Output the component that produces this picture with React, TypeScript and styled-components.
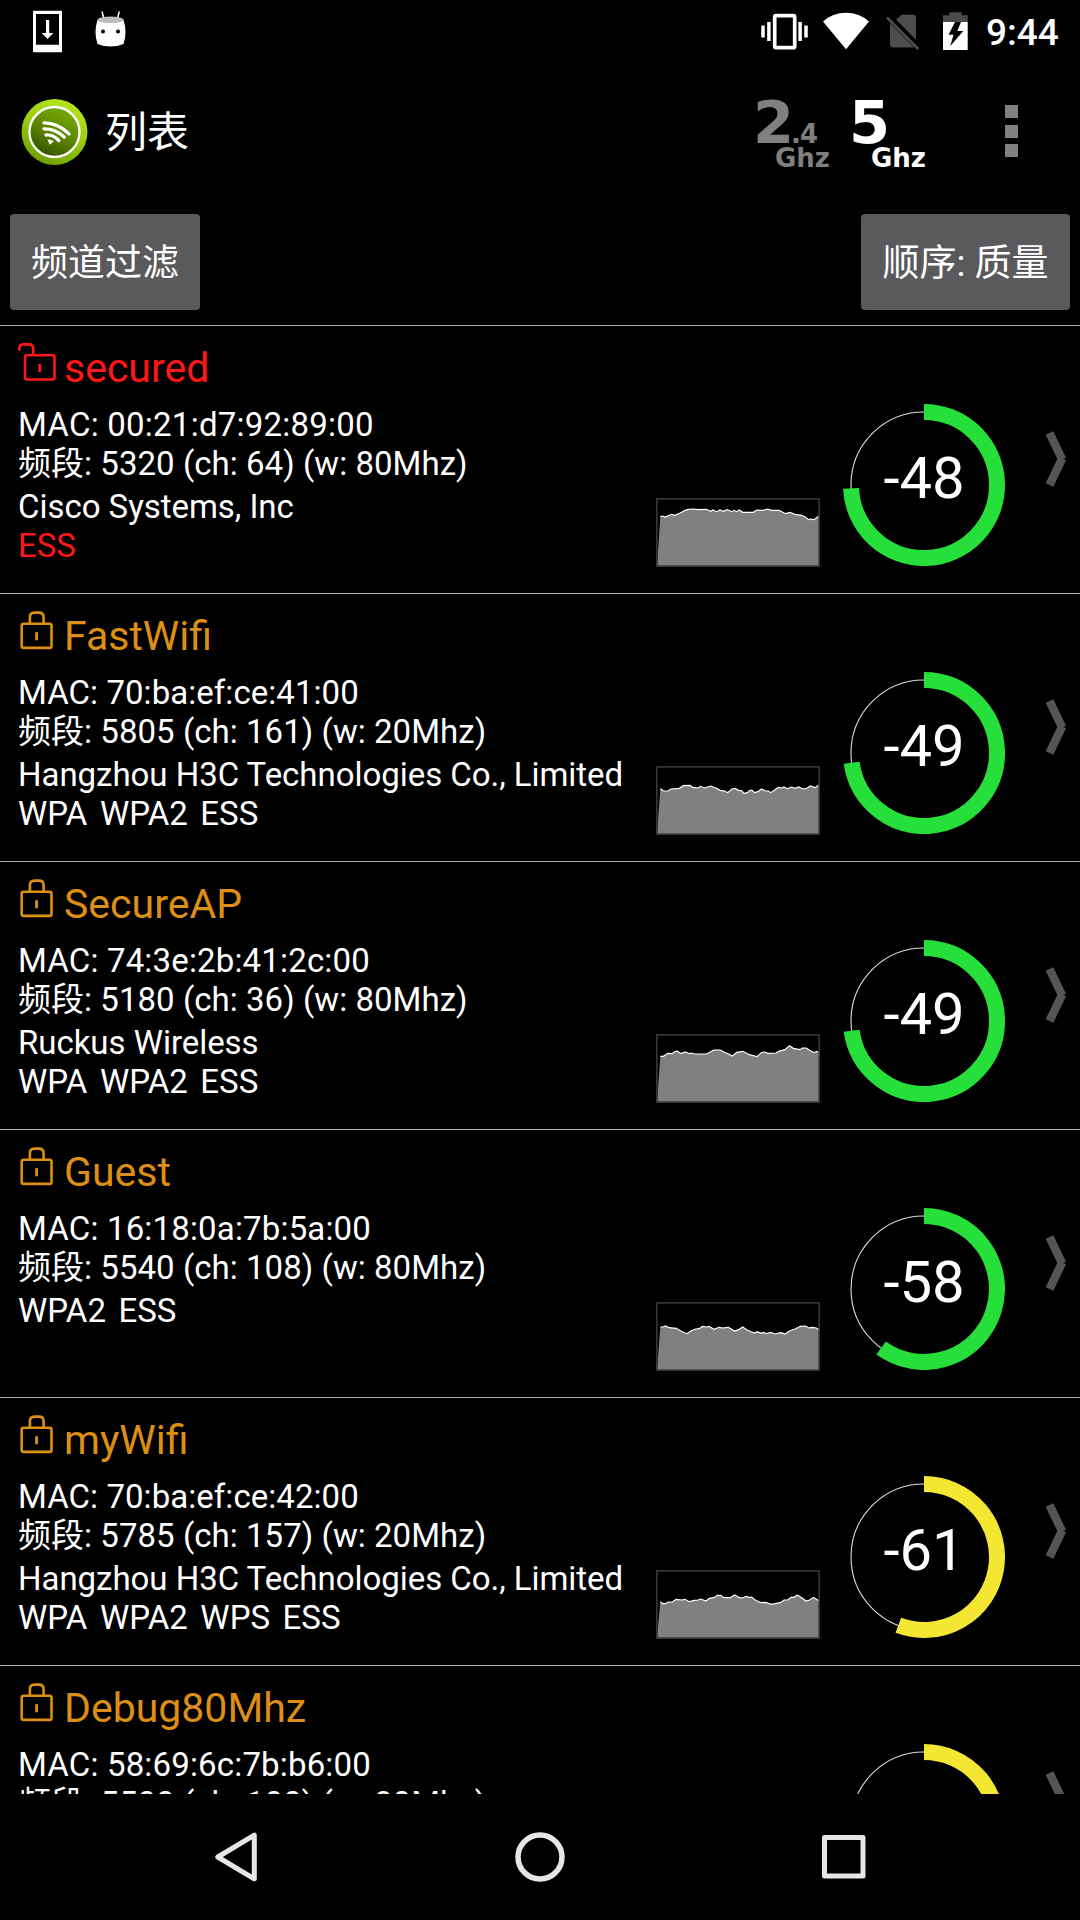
import React from "react";
import styled, { createGlobalStyle } from "styled-components";

const GlobalStyle = createGlobalStyle`
  html, body { margin: 0; padding: 0; background: #000; }
  * { box-sizing: border-box; }
  svg { display: block; flex: none; }
`;

const Screen = styled.div`
  width: 1080px;
  height: 1920px;
  display: flex;
  flex-direction: column;
  overflow: hidden;
  background: #000;
  color: #fff;
  font-family: Roboto, "Noto Sans CJK SC", sans-serif;
`;

const StatusBar = styled.header`
  height: 72px;
  flex: none;
  display: flex;
  justify-content: space-between;
`;

const StatusGroup = styled.div`
  display: flex;
`;

const Clock = styled.span`
  width: 94px;
  padding-top: 11px;
  font-size: 37px;
  line-height: 44px;
  font-weight: 500;
  white-space: nowrap;
`;

const AppBar = styled.div`
  height: 120px;
  flex: none;
  display: flex;
  align-items: center;
  justify-content: space-between;
  padding: 0 62px 0 21px;
`;

const Brand = styled.div`
  display: flex;
  align-items: center;
  gap: 17px;
`;

const PageTitle = styled.h1`
  margin: 0;
  padding-top: 2px;
  font-size: 42px;
  line-height: 50px;
  font-weight: 400;
`;

const Actions = styled.div`
  display: flex;
  align-items: center;
`;

const BandButton = styled.button<{ $active?: boolean }>`
  width: 96px;
  height: 84px;
  margin: 0;
  padding: 0;
  border: 0;
  background: none;
  display: flex;
  flex-direction: column;
  color: ${(p) => (p.$active ? "#fff" : "#808080")};
  font-family: "DejaVu Sans", sans-serif;
  font-weight: 700;
  text-align: left;
  white-space: nowrap;
`;

const BandNumber = styled.span`
  font-size: 59px;
  line-height: 66px;
  height: 55px;
  letter-spacing: -3px;
`;

const BandFraction = styled.small`
  font-size: 26px;
  letter-spacing: -1px;
`;

const BandUnit = styled.span`
  font-size: 26px;
  line-height: 26px;
  padding-left: 22px;
`;

const Overflow = styled.button`
  margin: 0 0 2px 60px;
  padding: 0;
  border: 0;
  background: none;
  display: flex;
  flex-direction: column;
  gap: 6.5px;
`;

const OverflowDot = styled.i`
  width: 13px;
  height: 13px;
  background: #808080;
`;

const FilterBar = styled.div`
  height: 133px;
  flex: none;
  display: flex;
  justify-content: space-between;
  align-items: flex-start;
  padding: 22px 10px 0;
`;

const FilterButton = styled.button<{ $width: number }>`
  width: ${(p) => p.$width}px;
  height: 96px;
  margin: 0;
  padding: 3px 0 0;
  border: 0;
  border-radius: 4px;
  background: #5a595b;
  color: #fff;
  font-family: Roboto, "Noto Sans CJK SC", sans-serif;
  font-size: 37px;
  line-height: 44px;
  white-space: nowrap;
`;

const List = styled.ul`
  flex: 1;
  min-height: 0;
  margin: 0;
  padding: 0;
  overflow: hidden;
  list-style: none;
`;

const Row = styled.li`
  height: 268px;
  display: flex;
  border-top: 1px solid #adadad;
  padding-left: 18px;
`;

const Info = styled.div`
  width: 638px;
  flex: none;
  padding-top: 15px;
`;

const NameLine = styled.div<{ $color: string }>`
  display: flex;
  height: 51px;
  color: ${(p) => p.$color};
`;

const Name = styled.span`
  padding-top: 3px;
  font-size: 41px;
  line-height: 48px;
  white-space: nowrap;
`;

const Details = styled.div<{ $gap: number }>`
  margin-top: ${(p) => p.$gap}px;
  font-size: 33px;
  line-height: 39px;
`;

const Line = styled.div<{ $color?: string; $tracking?: number }>`
  color: ${(p) => p.$color || "#fff"};
  letter-spacing: ${(p) => p.$tracking || 0}px;
  white-space: pre;
`;

const Flags = styled(Line)`
  display: flex;
  gap: 12.5px;
`;

const ChartCell = styled.div`
  width: 164px;
  flex: none;
  padding-top: 172px;
`;

const GaugeCell = styled.div`
  width: 162px;
  height: 162px;
  flex: none;
  margin: 78px 0 0 23px;
  display: grid;
  place-items: center;
  > * { grid-area: 1 / 1; }
`;

const Level = styled.span`
  font-size: 58px;
  line-height: 68px;
  padding-bottom: 15px;
`;

const ChevronCell = styled.div`
  flex: none;
  margin: 103px 0 0 38px;
`;

const NavBar = styled.nav`
  height: 126px;
  flex: none;
  display: flex;
  justify-content: space-between;
  align-items: center;
  padding: 0 206px;
`;

interface Network {
  name: string;
  open?: boolean;
  mac: string;
  band: string;
  vendor?: string;
  flags: string[];
  level: number;
  trace: string;
}

const RED = "#fd1717";
const ORANGE = "#dd8f13";

const networks: Network[] = [
  {
    name: "secured", open: true, mac: "00:21:d7:92:89:00",
    band: "5320 (ch: 64) (w: 80Mhz)", vendor: "Cisco Systems, Inc", flags: ["ESS"], level: -48,
    trace: "13,56 20,54 27,57 47,49 57,52 72,45 92,35 112,33 127,35 150,34 165,40 170,36 182,41 192,36 202,40 214,35 227,41 235,37 242,41 250,36 260,43 292,43 302,36 322,37 335,33 347,37 369,37 389,47 402,43 417,49 437,52 449,58 457,65 464,63 474,65 489,54",
  },
  {
    name: "FastWifi", mac: "70:ba:ef:ce:41:00",
    band: "5805 (ch: 161) (w: 20Mhz)", vendor: "Hangzhou H3C Technologies Co., Limited",
    flags: ["WPA", "WPA2", "ESS"], level: -49,
    trace: "13,68 22,75 36,75 45,69 70,67 82,59 102,58 110,64 127,66 133,61 145,66 164,60 180,66 192,73 206,75 215,80 228,69 237,67 248,73 256,74 264,82 274,80 282,73 288,73 296,80 306,77 316,69 329,75 337,75 344,80 355,73 367,64 378,66 384,63 394,68 406,63 418,67 428,63 441,69 454,66 463,60 477,65 489,57",
  },
  {
    name: "SecureAP", mac: "74:3e:2b:41:2c:00",
    band: "5180 (ch: 36) (w: 80Mhz)", vendor: "Ruckus Wireless",
    flags: ["WPA", "WPA2", "ESS"], level: -49,
    trace: "13,67 22,67 36,58 48,59 58,52 66,52 74,59 88,54 99,59 106,57 115,60 152,60 173,48 193,48 205,55 218,60 229,66 242,55 261,52 280,62 303,68 316,56 326,54 336,58 360,57 368,52 387,47 400,35 412,43 432,47 439,42 451,42 463,50 474,56 482,52 489,56",
  },
  {
    name: "Guest", mac: "16:18:0a:7b:5a:00",
    band: "5540 (ch: 108) (w: 80Mhz)", flags: ["WPA2", "ESS"], level: -58,
    trace: "13,75 20,75 28,72 39,77 61,79 74,87 93,95 104,87 119,81 130,80 139,73 151,75 159,73 174,82 189,76 200,78 217,76 236,87 248,83 260,75 272,83 287,90 295,93 304,89 315,94 323,91 330,95 345,91 355,96 375,92 387,96 400,87 417,81 433,73 448,72 459,78 467,76 481,78 489,83",
  },
  {
    name: "myWifi", mac: "70:ba:ef:ce:42:00",
    band: "5785 (ch: 157) (w: 20Mhz)", vendor: "Hangzhou H3C Technologies Co., Limited",
    flags: ["WPA", "WPA2", "WPS", "ESS"], level: -61,
    trace: "13,95 21,101 29,101 36,96 49,96 60,88 77,90 87,88 100,95 115,91 126,90 134,87 150,93 160,85 174,83 184,76 194,76 203,83 222,83 236,75 250,83 260,84 270,79 280,82 287,81 299,91 315,98 329,97 346,103 373,98 384,90 395,90 405,82 414,82 424,75 437,83 450,93 461,90 473,82 489,93",
  },
  {
    name: "Debug80Mhz", mac: "58:69:6c:7b:b6:00",
    band: "5500 (ch: 100) (w: 80Mhz)", flags: ["WPA2", "ESS"], level: -61,
    trace: "13,95 60,88 150,93 250,83 350,98 489,90",
  },
];

const addressTracking = (mac: string) => {
  const digits = (mac.match(/\d/g) || []).length;
  return (0.5 * digits - 0.3 * (12 - digits)) / 22;
};

const LockIcon = ({ open }: { open?: boolean }) => (
  <svg width="46" height="44" viewBox="0 0 46 44" fill="none" stroke="currentColor" strokeWidth="2.6">
    {open ? (
      <>
        <path d="M1.300 9.800V7.700Q1.300 3.400 5.500 3.400H11Q15.200 3.400 15.200 7.700V14" />
        <rect x="7" y="14.300" width="29.500" height="24.200" rx="2" />
        <path d="M21.700 23V31" strokeWidth="3" />
      </>
    ) : (
      <>
        <path d="M11.900 14V8.200Q11.900 3.600 16.500 3.600H21Q25.600 3.600 25.600 8.200V14" />
        <rect x="3.700" y="14.700" width="29.800" height="24.200" rx="2" />
        <path d="M18.600 23.200V31.300" strokeWidth="2.800" />
      </>
    )}
  </svg>
);

const HistoryChart = ({ trace }: { trace: string }) => (
  <svg width="164" height="69" viewBox="0 0 492 207">
    <polygon points={`3,204 ${trace} 489,204`} fill="#808080" />
    <polyline points={trace} fill="none" stroke="#fff" strokeWidth="3.500" />
    <rect x="2.500" y="2.500" width="487" height="202" fill="none" stroke="#363636" strokeWidth="5" />
  </svg>
);

const Gauge = ({ level }: { level: number }) => {
  const angle = ((100 + level) / 70) * 2 * Math.PI;
  const x = 81 + 73 * Math.sin(angle);
  const y = 81 - 73 * Math.cos(angle);
  return (
    <svg width="162" height="162" viewBox="0 0 162 162" fill="none">
      <circle cx="81" cy="81" r="73" stroke="#ddd" strokeWidth="1.100" />
      <path
        d={`M81 8A73 73 0 ${angle > Math.PI ? 1 : 0} 1 ${x} ${y}`}
        stroke={level > -60 ? "#27df3b" : "#f3e733"}
        strokeWidth="16"
      />
    </svg>
  );
};

const Chevron = () => (
  <svg width="24" height="60" viewBox="0 0 24 60" stroke="#555" strokeWidth="8.500">
    <path d="M6.500 4L19.200 30.500" />
    <path d="M6.500 56L19.200 29.500" />
  </svg>
);

const NotificationIcons = () => (
  <svg width="140" height="72" viewBox="0 0 140 72">
    <path fill="#fff" fillRule="evenodd" d="M34 10.700H61Q62 10.700 62 11.700V51.300Q62 52.300 61 52.300H34Q33 52.300 33 51.300V11.700Q33 10.700 34 10.700ZM36 14V44.700H59V14Z" />
    <path fill="#fff" d="M46 20H49.200V33H53.300L47.600 39L41.700 33H46Z" />
    <path stroke="#fff" strokeWidth="1.500" d="M102 11.500L104 19M119.300 11.500L117.300 19" />
    <path fill="#fff" d="M97.500 20Q110.500 15 123.500 20Q127.500 32 123.500 44Q110.500 49 97.500 44Q93.500 32 97.500 20Z" />
    <ellipse cx="110.500" cy="19.800" rx="13" ry="3.400" fill="#bdbdbd" />
    <circle cx="103" cy="31.600" r="2" />
    <circle cx="118" cy="31.600" r="2" />
  </svg>
);

const SystemIcons = () => (
  <svg width="230" height="72" viewBox="756 0 230 72">
    <rect x="774.700" y="15.700" width="20" height="32" rx="1.500" fill="none" stroke="#fff" strokeWidth="3.700" />
    <path stroke="#fff" strokeWidth="3.500" d="M763 25.500V37.500M768.900 22V41M800.100 22V41M806 25.500V37.500" />
    <path fill="#fff" d="M823 21.500Q832.500 12.700 846 12.700T869 21.500L846 49.300Z" />
    <path fill="#4d4d4d" d="M890 23L914.500 47.500H893Q890 47.500 890 44.500ZM901.500 14.700H913Q916 14.700 916 17.700V40L896 19.500Z" />
    <path stroke="#4d4d4d" strokeWidth="2.500" d="M887 17.500L918.300 49" />
    <path fill="#4b4b4b" d="M949.300 12.300H961.700V15.300H967.700V22H943V15.300H949.300Z" />
    <rect x="943" y="22" width="24.700" height="28" fill="#fff" />
    <path fill="#000" d="M955 22H961L957.300 31H963.300L950.300 46L953.500 34.700H948.600Z" />
  </svg>
);

const AppLogo = () => (
  <svg width="67" height="67" viewBox="0 0.500 67 67">
    <defs>
      <linearGradient id="rim" x1="0.7" y1="0" x2="0.3" y2="1">
        <stop offset="0" stopColor="#b7e61f" />
        <stop offset="0.5" stopColor="#99cb0e" />
        <stop offset="1" stopColor="#6b9c00" />
      </linearGradient>
      <linearGradient id="core" x1="0.75" y1="0.1" x2="0.3" y2="1">
        <stop offset="0" stopColor="#76a606" />
        <stop offset="0.5" stopColor="#598500" />
        <stop offset="1" stopColor="#344f00" />
      </linearGradient>
    </defs>
    <circle cx="33.500" cy="33.500" r="33" fill="url(#rim)" />
    <circle cx="33.500" cy="33.500" r="25" fill="url(#core)" stroke="#fff" strokeWidth="2.300" />
    <g fill="none" stroke="#fff" strokeLinecap="round" strokeWidth="3.300">
      <path d="M23 24.300Q37 24.300 48 35.300" />
      <path d="M23 30.300Q34.500 30 43.300 38.700" />
      <path d="M25 36.500Q32 36 37.800 42" />
    </g>
    <path fill="#fff" d="M26.500 41Q30 40.500 32.800 42.800L28.800 46.300Z" />
  </svg>
);

const App = () => (
  <Screen>
    <GlobalStyle />
    <StatusBar>
      <NotificationIcons />
      <StatusGroup>
        <SystemIcons />
        <Clock>9:44</Clock>
      </StatusGroup>
    </StatusBar>
    <AppBar>
      <Brand>
        <AppLogo />
        <PageTitle>列表</PageTitle>
      </Brand>
      <Actions>
        <BandButton>
          <BandNumber>2<BandFraction>.4</BandFraction></BandNumber>
          <BandUnit>Ghz</BandUnit>
        </BandButton>
        <BandButton $active>
          <BandNumber>5</BandNumber>
          <BandUnit>Ghz</BandUnit>
        </BandButton>
        <Overflow>
          <OverflowDot />
          <OverflowDot />
          <OverflowDot />
        </Overflow>
      </Actions>
    </AppBar>
    <FilterBar>
      <FilterButton $width={190}>频道过滤</FilterButton>
      <FilterButton $width={209}>顺序: 质量</FilterButton>
    </FilterBar>
    <List>
      {networks.map((n) => (
        <Row key={n.mac}>
          <Info>
            <NameLine $color={n.open ? RED : ORANGE}>
              <LockIcon open={n.open} />
              <Name>{n.name}</Name>
            </NameLine>
            <Details $gap={13}>
              <Line $tracking={addressTracking(n.mac)}>MAC: {n.mac}</Line>
              <Line $tracking={0.04}>频段: {n.band}</Line>
            </Details>
            <Details $gap={4}>
              {n.vendor && <Line $tracking={-0.04}>{n.vendor}</Line>}
              <Flags $color={n.open ? RED : undefined}>
                {n.flags.map((f) => <span key={f}>{f}</span>)}
              </Flags>
            </Details>
          </Info>
          <ChartCell>
            <HistoryChart trace={n.trace} />
          </ChartCell>
          <GaugeCell>
            <Gauge level={n.level} />
            <Level>{n.level}</Level>
          </GaugeCell>
          <ChevronCell>
            <Chevron />
          </ChevronCell>
        </Row>
      ))}
    </List>
    <NavBar>
      <svg width="60" height="60" viewBox="0 0 60 60" fill="none" stroke="#e6e6e6" strokeWidth="5" strokeLinejoin="round">
        <path d="M11.800 30L48.300 8.200V51.800Z" />
      </svg>
      <svg width="60" height="60" viewBox="0 0 60 60" fill="none" stroke="#e6e6e6" strokeWidth="5.500">
        <circle cx="30" cy="30" r="22" />
      </svg>
      <svg width="60" height="60" viewBox="0 0 60 60" fill="none" stroke="#e6e6e6" strokeWidth="5" strokeLinejoin="round">
        <rect x="10.500" y="10.500" width="38.500" height="38.500" />
      </svg>
    </NavBar>
  </Screen>
);

export default App;
